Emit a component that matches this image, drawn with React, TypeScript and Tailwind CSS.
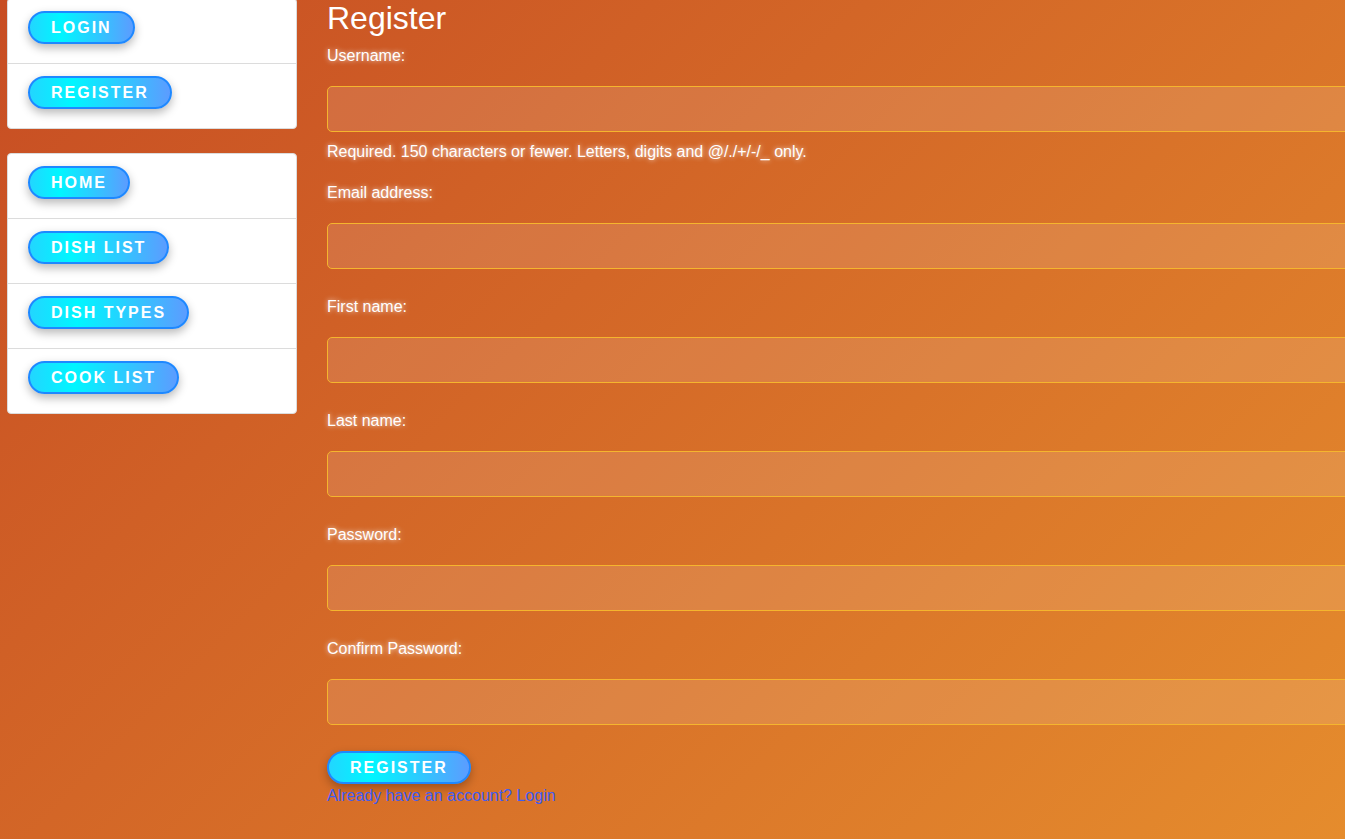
import React from 'react';

const PillButton: React.FC<{ label: string }> = ({ label }) => (
  <button
    type="button"
    className="h-[33px] px-[21px] flex items-center rounded-full border-2 border-[#1e88ff] bg-[linear-gradient(90deg,#22d6ff_0%,#00f6ff_30%,#5c9cff_100%)] text-white text-[16px] font-bold uppercase tracking-[2px] leading-none shadow-[0_4px_10px_rgba(0,0,0,0.28)]"
  >
    {label}
  </button>
);

const NavPanel: React.FC<{ items: string[]; className?: string }> = ({ items, className }) => (
  <div className={`bg-white border border-[#dcdcdc] rounded-[4px] divide-y divide-[#dcdcdc] ${className ?? ''}`}>
    {items.map(item => (
      <div key={item} className="pt-[12px] pb-[19px] pl-[20px] flex">
        <PillButton label={item} />
      </div>
    ))}
  </div>
);

const glow = '[text-shadow:0_0_5px_rgba(255,255,255,0.85)]';

const Field: React.FC<{ label: string; type?: string; className?: string }> = ({
  label,
  type = 'text',
  className,
}) => (
  <div className={`flex flex-col ${className ?? ''}`}>
    <label className={`text-white text-[16px] leading-[18px] mb-[21px] ${glow}`}>{label}</label>
    <input
      type={type}
      className="h-[46px] w-[1100px] rounded-[5px] border border-[#f5b52e] bg-white/[0.12] outline-none px-3 text-white"
    />
  </div>
);

export default function App() {
  return (
    <div
      className="w-full h-[839px] overflow-hidden flex bg-[linear-gradient(135deg,#c74d23_0%,#e58c2d_100%)]"
      style={{ fontFamily: '"Liberation Sans", Arial, sans-serif' }}
    >
      {/* Sidebar */}
      <div className="w-[290px] ml-[7px] -mt-[2px] shrink-0 flex flex-col gap-[24px]">
        <NavPanel items={['Login', 'Register']} />
        <NavPanel items={['Home', 'Dish list', 'Dish types', 'Cook list']} />
      </div>

      {/* Form */}
      <div className="ml-[30px] flex-1 min-w-0 flex flex-col">
        <h2 className="text-white text-[32px] leading-[37px] mb-[10px]">Register</h2>

        <Field label="Username:" />
        <p className={`text-white text-[16px] leading-[18px] mt-[11px] ${glow}`}>
          Required. 150 characters or fewer. Letters, digits and @/./+/-/_ only.
        </p>

        <Field label="Email address:" type="email" className="mt-[23px]" />
        <Field label="First name:" className="mt-[29px]" />
        <Field label="Last name:" className="mt-[29px]" />
        <Field label="Password:" type="password" className="mt-[29px]" />
        <Field label="Confirm Password:" type="password" className="mt-[29px]" />

        <div className="mt-[26px] flex">
          <PillButton label="Register" />
        </div>
        <a href="#" className="mt-[3px] text-[16px] leading-[18px] text-[#3f5cf2]">
          Already have an account? Login
        </a>
      </div>
    </div>
  );
}
